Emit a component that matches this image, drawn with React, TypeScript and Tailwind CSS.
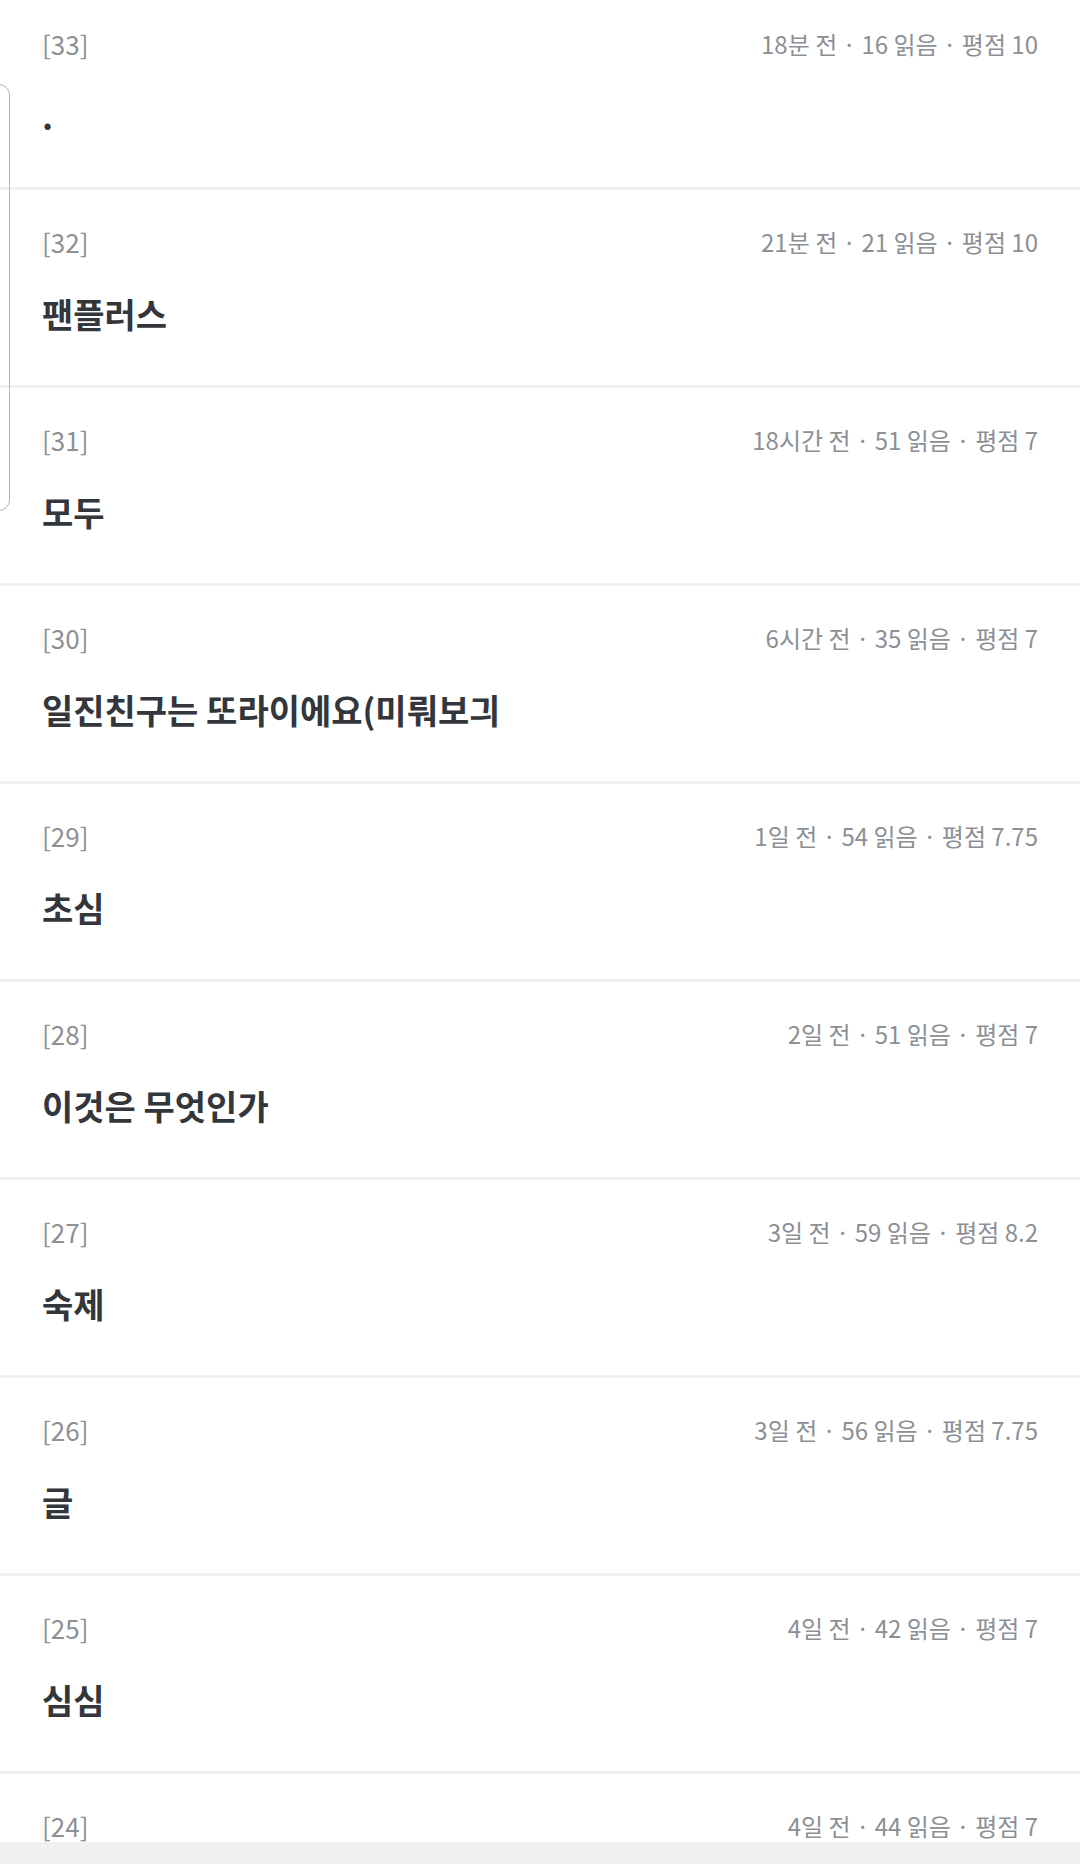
import React from 'react';

type Entry = {
  no: number;
  meta: string;
  title: string;
};

const entries: Entry[] = [
  { no: 33, meta: '18분 전 · 16 읽음 · 평점 10', title: '.' },
  { no: 32, meta: '21분 전 · 21 읽음 · 평점 10', title: '팬플러스' },
  { no: 31, meta: '18시간 전 · 51 읽음 · 평점 7', title: '모두' },
  { no: 30, meta: '6시간 전 · 35 읽음 · 평점 7', title: '일진친구는 또라이에요(미뤄보긔' },
  { no: 29, meta: '1일 전 · 54 읽음 · 평점 7.75', title: '초심' },
  { no: 28, meta: '2일 전 · 51 읽음 · 평점 7', title: '이것은 무엇인가' },
  { no: 27, meta: '3일 전 · 59 읽음 · 평점 8.2', title: '숙제' },
  { no: 26, meta: '3일 전 · 56 읽음 · 평점 7.75', title: '글' },
  { no: 25, meta: '4일 전 · 42 읽음 · 평점 7', title: '심심' },
  { no: 24, meta: '4일 전 · 44 읽음 · 평점 7', title: '' },
];

const EntryRow: React.FC<{ entry: Entry }> = ({ entry }) => (
  <li className="h-[198px] shrink-0 border-b-[3px] border-[#f0f1f2] px-[42px] pt-[36px]">
    <div className="flex items-center justify-between leading-[32px] text-[#8c9095]">
      <span className="text-[26px]">[{entry.no}]</span>
      <span className="text-[24px]">{entry.meta}</span>
    </div>
    <div className="mt-[34px] text-[34px] font-bold leading-[44px] text-[#33363b]">
      {entry.title}
    </div>
  </li>
);

export default function App() {
  return (
    <div
      className="relative flex h-[1864px] w-[1080px] flex-col overflow-hidden bg-white"
      style={{ fontFamily: '"Noto Sans CJK KR", "Noto Sans", sans-serif' }}
    >
      <div className="flex-1 overflow-hidden">
        <ul className="-mt-[8px] flex flex-col">
          {entries.map((entry) => (
            <EntryRow key={entry.no} entry={entry} />
          ))}
        </ul>
      </div>
      <div className="h-[22px] shrink-0 bg-[#f0f0f0]" />

      {/* 왼쪽 가장자리 핸들 */}
      <div className="absolute -left-[12px] top-[84px] h-[427px] w-[22px] rounded-r-[11px] border-[1.5px] border-[#b4b4b4]" />
    </div>
  );
}
